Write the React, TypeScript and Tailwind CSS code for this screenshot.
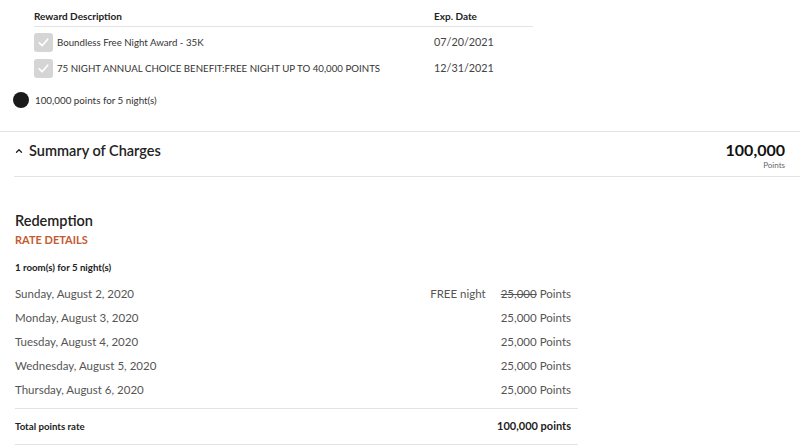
import { ChevronUp } from "lucide-react";

const rewards = [
  { name: "Boundless Free Night Award - 35K", exp: "07/20/2021" },
  {
    name: "75 NIGHT ANNUAL CHOICE BENEFIT:FREE NIGHT UP TO 40,000 POINTS",
    exp: "12/31/2021",
  },
];

const nights = [
  { date: "Sunday, August 2, 2020", free: true },
  { date: "Monday, August 3, 2020", free: false },
  { date: "Tuesday, August 4, 2020", free: false },
  { date: "Wednesday, August 5, 2020", free: false },
  { date: "Thursday, August 6, 2020", free: false },
];

function CheckBox() {
  return (
    <span className="w-[19px] h-[19px] rounded-[3px] bg-[#d5d5d5] flex items-center justify-center shrink-0">
      <svg width="13" height="13" viewBox="0 0 14 14" fill="none">
        <path
          d="M2.5 7.5 L5.5 10.5 L11.5 3.5"
          stroke="#ffffff"
          strokeWidth="1.8"
          strokeLinecap="round"
          strokeLinejoin="round"
        />
      </svg>
    </span>
  );
}

export default function App() {
  return (
    <div className="w-[800px] h-[448px] overflow-hidden bg-white text-[#333] font-['Lato','Open_Sans',sans-serif]">
      {/* rewards */}
      <div className="pl-[34px] pt-[9px] w-[533px]">
        <div className="flex h-[18px] border-b border-[#e3e3e3] text-[10px] font-bold text-[#222]">
          <div className="w-[400px]">Reward Description</div>
          <div>Exp. Date</div>
        </div>
        <div className="mt-[2px]">
          {rewards.map((r) => (
            <div key={r.exp} className="flex items-center h-[26px]">
              <div className="w-[400px] flex items-center gap-[4px] text-[9.7px] text-[#333]">
                <CheckBox />
                <span>{r.name}</span>
              </div>
              <div className="text-[10.8px] text-[#444]">{r.exp}</div>
            </div>
          ))}
        </div>
      </div>
      <div className="flex items-center gap-[6px] pl-[13px] mt-[10px] h-[18px] text-[9.8px] text-[#333]">
        <span className="w-[16px] h-[16px] rounded-full bg-[#1a1a1a]" />
        <span>100,000 points for 5 night(s)</span>
      </div>

      {/* summary */}
      <div className="mt-[22px] border-t border-[#e3e3e3]">
        <div className="ml-[14px] flex items-center justify-between h-[45px] pr-[15px] border-b border-[#e3e3e3]">
          <div className="flex items-center gap-[5px] mb-[7px] text-[14.5px] font-semibold text-[#222]">
            <ChevronUp size={10} strokeWidth={3} />
            <span>Summary of Charges</span>
          </div>
          <div className="flex flex-col items-end mt-[3px] leading-none">
            <span className="text-[16px] font-bold text-[#111]">100,000</span>
            <span className="text-[8px] text-[#666] mt-[3px]">Points</span>
          </div>
        </div>
      </div>

      {/* redemption */}
      <div className="pl-[15px] w-[578px] pt-[34px]">
        <div className="text-[14.5px] font-semibold text-[#222] leading-[20px]">Redemption</div>
        <div className="text-[11px] font-bold text-[#c45a2e] leading-[18px]">RATE DETAILS</div>
        <div className="text-[9.7px] font-bold text-[#222] mt-[11px] leading-[14px]">
          1 room(s) for 5 night(s)
        </div>
        <div className="pt-[8px] pb-[6px] border-b border-[#e3e3e3]">
          {nights.map((n) => (
            <div
              key={n.date}
              className="flex items-center justify-between h-[24px] pr-[7px] text-[11.5px] text-[#555]"
            >
              <span>{n.date}</span>
              <span className="flex items-center">
                {n.free && <span className="mr-[15px]">FREE night</span>}
                <span className={n.free ? "line-through" : ""}>25,000</span>
                <span className="ml-[3px]">Points</span>
              </span>
            </div>
          ))}
        </div>
        <div className="flex items-center justify-between h-[36px] pr-[7px] border-b border-[#e3e3e3] font-bold text-[#222]">
          <span className="text-[9.7px]">Total points rate</span>
          <span className="text-[11px]">100,000 points</span>
        </div>
      </div>
    </div>
  );
}
